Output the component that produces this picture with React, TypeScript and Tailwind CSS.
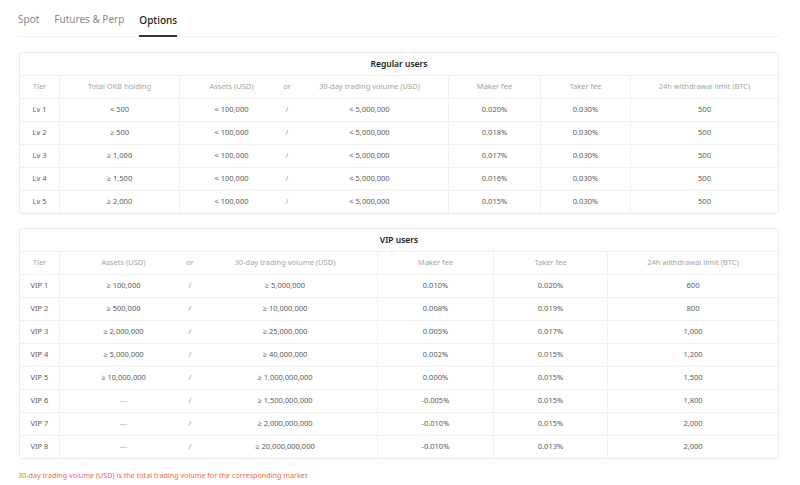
import React from "react";

type Row = string[];

const regularCols = "grid-cols-[39px_120px_104px_8px_157px_92px_90px_148px]";
const vipCols = "grid-cols-[39px_128px_6px_184px_116px_114px_171px]";

const regularHead: Row = [
  "Tier",
  "Total OKB holding",
  "Assets (USD)",
  "or",
  "30-day trading volume (USD)",
  "Maker fee",
  "Taker fee",
  "24h withdrawal limit (BTC)",
];

const regularRows: Row[] = [
  ["Lv 1", "< 500", "< 100,000", "/", "< 5,000,000", "0.020%", "0.030%", "500"],
  ["Lv 2", "≥ 500", "< 100,000", "/", "< 5,000,000", "0.018%", "0.030%", "500"],
  ["Lv 3", "≥ 1,000", "< 100,000", "/", "< 5,000,000", "0.017%", "0.030%", "500"],
  ["Lv 4", "≥ 1,500", "< 100,000", "/", "< 5,000,000", "0.016%", "0.030%", "500"],
  ["Lv 5", "≥ 2,000", "< 100,000", "/", "< 5,000,000", "0.015%", "0.030%", "500"],
];

const vipHead: Row = [
  "Tier",
  "Assets (USD)",
  "or",
  "30-day trading volume (USD)",
  "Maker fee",
  "Taker fee",
  "24h withdrawal limit (BTC)",
];

const vipRows: Row[] = [
  ["VIP 1", "≥ 100,000", "/", "≥ 5,000,000", "0.010%", "0.020%", "600"],
  ["VIP 2", "≥ 500,000", "/", "≥ 10,000,000", "0.008%", "0.019%", "800"],
  ["VIP 3", "≥ 2,000,000", "/", "≥ 25,000,000", "0.005%", "0.017%", "1,000"],
  ["VIP 4", "≥ 5,000,000", "/", "≥ 40,000,000", "0.002%", "0.015%", "1,200"],
  ["VIP 5", "≥ 10,000,000", "/", "≥ 1,000,000,000", "0.000%", "0.015%", "1,500"],
  ["VIP 6", "---", "/", "≥ 1,500,000,000", "-0.005%", "0.015%", "1,800"],
  ["VIP 7", "---", "/", "≥ 2,000,000,000", "-0.010%", "0.015%", "2,000"],
  ["VIP 8", "---", "/", "≥ 20,000,000,000", "-0.010%", "0.013%", "2,000"],
];

function FeeTable({
  title,
  cols,
  head,
  rows,
  dividers,
}: {
  title: string;
  cols: string;
  head: Row;
  rows: Row[];
  dividers: number[];
}) {
  const cell = (i: number) =>
    `flex h-[22px] items-center justify-center whitespace-nowrap ${
      dividers.includes(i) ? "border-l border-[#f1f1f1]" : ""
    }`;

  return (
    <div className="w-[760px] rounded-[3px] border border-[#ececec]">
      <div className="flex h-[22px] items-center justify-center text-[8.5px] font-semibold text-[#222]">
        {title}
      </div>
      <div className={`grid ${cols} border-t border-[#f0f0f0] text-[#a3a3a3]`}>
        {head.map((h, i) => (
          <div key={i} className={cell(i)}>
            {h}
          </div>
        ))}
      </div>
      {rows.map((r, ri) => (
        <div key={ri} className={`grid ${cols} border-t border-[#f0f0f0] text-[#5a5a5a]`}>
          {r.map((c, i) => (
            <div key={i} className={`${cell(i)} ${c === "/" || c === "---" ? "text-[#999]" : ""}`}>
              {c}
            </div>
          ))}
        </div>
      ))}
    </div>
  );
}

export default function App() {
  return (
    <main
      className="min-h-[485px] w-[800px] bg-white pl-[18px] pr-[21px] text-[7.5px]"
      style={{ fontFamily: '"Noto Sans", "Open Sans", sans-serif' }}
    >
      <nav className="flex h-[37px] w-[761px] items-end gap-[15px] border-b border-[#f0f0f0] text-[10px]">
        <span className="pb-[9px] text-[#8a8a8a]">Spot</span>
        <span className="pb-[9px] text-[#8a8a8a]">Futures &amp; Perp</span>
        <span className="-mb-px border-b-2 border-[#333] pb-[7px] font-medium text-[#222]">Options</span>
      </nav>

      <div className="mt-[15px] pl-px">
        <FeeTable
          title="Regular users"
          cols={regularCols}
          head={regularHead}
          rows={regularRows}
          dividers={[1, 2, 5, 6, 7]}
        />
      </div>

      <div className="mt-[14px] pl-px">
        <FeeTable
          title="VIP users"
          cols={vipCols}
          head={vipHead}
          rows={vipRows}
          dividers={[1, 4, 5, 6]}
        />
      </div>

      <p className="mt-[11px] text-[7.2px] text-[#ef6a48]">
        30-day trading volume (USD) is the total trading volume for the corresponding market
      </p>
    </main>
  );
}
